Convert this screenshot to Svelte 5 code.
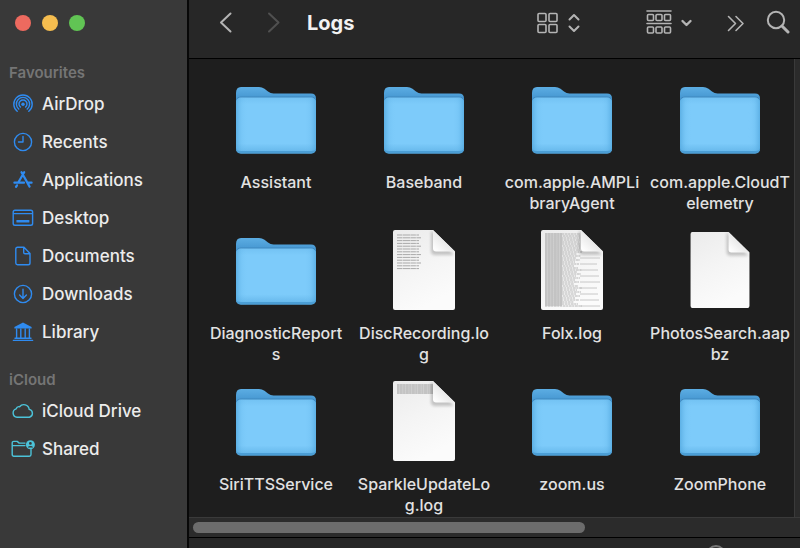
<script lang="ts">
	type Kind = 'folder' | 'doc';
	type Preview = 'list' | 'dense' | 'header';

	interface Entry {
		lines: string[];
		kind: Kind;
		preview?: Preview;
		small?: boolean;
	}

	const sections = [
		{
			title: 'Favourites',
			tint: 'blue',
			items: ['AirDrop', 'Recents', 'Applications', 'Desktop', 'Documents', 'Downloads', 'Library']
		},
		{ title: 'iCloud', tint: 'teal', items: ['iCloud Drive', 'Shared'] }
	];

	const entries: Entry[] = [
		{ lines: ['Assistant'], kind: 'folder' },
		{ lines: ['Baseband'], kind: 'folder' },
		{ lines: ['com.apple.AMPLi', 'braryAgent'], kind: 'folder' },
		{ lines: ['com.apple.CloudT', 'elemetry'], kind: 'folder' },
		{ lines: ['DiagnosticReport', 's'], kind: 'folder' },
		{ lines: ['DiscRecording.lo', 'g'], kind: 'doc', preview: 'list' },
		{ lines: ['Folx.log'], kind: 'doc', preview: 'dense' },
		{ lines: ['PhotosSearch.aap', 'bz'], kind: 'doc', small: true },
		{ lines: ['SiriTTSService'], kind: 'folder' },
		{ lines: ['SparkleUpdateLo', 'g.log'], kind: 'doc', preview: 'header' },
		{ lines: ['zoom.us'], kind: 'folder' },
		{ lines: ['ZoomPhone'], kind: 'folder' }
	];

	const listRows = Array.from({ length: 13 }, (_, i) => 5 + i * 2.8);
	const denseRows = Array.from({ length: 37 }, (_, i) => 4 + i * 2);

	let zoom = $state(50);
</script>

{#snippet sideIcon(name: string)}
	<svg class="side-icon" viewBox="0 0 24 24" aria-hidden="true">
		{#if name === 'AirDrop'}
			<path d="M6.2 19.3A9.2 9.2 0 1 1 17.8 19.3M7.8 17.1A6.6 6.6 0 1 1 16.2 17.1M9.4 15A4 4 0 1 1 14.6 15" />
			<circle class="solid" cx="12" cy="12.2" r="1.7" />
		{:else if name === 'Recents'}
			<circle cx="12" cy="12" r="8.6" />
			<path d="M12 6.5V12H7.5" />
		{:else if name === 'Applications'}
			<path class="thick" d="M13.2 4.2L7.4 14.3M10.5 4.2L18.6 18.6M3.4 14.7H13M16.4 14.7H20.6M6 17.3L5 18.9" />
		{:else if name === 'Desktop'}
			<rect x="2.2" y="4.3" width="19.4" height="15" rx="1.8" />
			<path d="M2.5 7.6H21.3" />
			<rect class="solid" x="5.4" y="14" width="13" height="2.6" rx="0.6" />
		{:else if name === 'Documents'}
			<path d="M6.6 3.2H13L19 9.4V19a1.8 1.8 0 0 1-1.8 1.8H6.6A1.8 1.8 0 0 1 4.8 19V5a1.8 1.8 0 0 1 1.8-1.8ZM12.7 3.5V8.4a1.3 1.3 0 0 0 1.3 1.3H18.8" />
		{:else if name === 'Downloads'}
			<circle cx="12" cy="12" r="8.6" />
			<path d="M12 7.2V16.2M8.6 13L12 16.4L15.4 13" />
		{:else if name === 'Library'}
			<path class="solid" d="M12 2.6L20.6 7V8.6H3.4V7Z" />
			<path d="M5.6 9V18M9.8 9V18M14.2 9V18M18.4 9V18" />
			<path d="M4 18.3H20M2.4 20.4H21.6" />
		{:else if name === 'iCloud Drive'}
			<path d="M6 18.2A4.3 4.3 0 0 1 5.2 9.8A2.9 2.9 0 0 1 8.6 7.7A5.4 5.4 0 0 1 18.2 10.4A4 4 0 0 1 18.4 18.2Z" />
		{:else}
			<path d="M14 8.6H1.6M20 12.5V17.6a1.6 1.6 0 0 1-1.6 1.6H2.8A1.6 1.6 0 0 1 1.2 17.6V6A1.6 1.6 0 0 1 2.8 4.4H6.2L8.2 6.1H14" />
			<circle class="solid" cx="19.4" cy="7.8" r="4.5" />
			<path class="cutout" d="M19.4 5a1.4 1.4 0 1 1 0 2.8a1.4 1.4 0 0 1 0-2.8ZM16.7 10.4a2.8 2 0 0 1 5.4 0Z" />
		{/if}
	</svg>
{/snippet}

{#snippet folderIcon()}
	<svg class="file-icon" viewBox="0 0 80 80" aria-hidden="true">
		<path fill="url(#folder-back)" d="M0 14Q0 8 5 8H23Q26 8 28.5 9.8L32 12.5Q34.5 14.5 37.5 14.5H75Q80 14.5 80 19.5V40H0Z" />
		<path fill="#3f87bd" d="M0.5 20Q1.5 17.5 5 17.5H75Q78.500 17.5 79.5 20V26H0.5Z" />
		<rect fill="url(#folder-front)" x="0" y="18.5" width="80" height="56" rx="5" />
		<rect fill="url(#folder-sides)" x="0" y="18.5" width="80" height="56" rx="5" />
		<path fill="#4b9ed5" d="M0 68.5V69.5Q0 74.5 5 74.5H75Q80 74.5 80 69.5V68.5Q80 72 75 72H5Q0 72 0 68.5Z" />
	</svg>
{/snippet}

{#snippet docIcon(preview: Preview | undefined, small: boolean | undefined)}
	<svg class="file-icon" class:small viewBox="0 0 80 80" aria-hidden="true">
		<path fill="url(#paper)" d="M11 0H49L71 21.5V78Q71 80 69 80H11Q9 80 9 78V2Q9 0 11 0Z" />
		{#if preview === 'list'}
			{#each listRows as y, i}
				<path class="row" d="M13 {y}H{i % 3 === 1 ? 37 : 35}" />
			{/each}
		{:else if preview === 'dense'}
			<rect x="13" y="3" width="17" height="73" fill="#d6d6d6" />
			{#each denseRows as y, i}
				<path class="dense a" d="M13 {y}H30" />
				<path class="dense b" stroke-dashoffset={(i * 7) % 5} d="M30 {y}H{y < 21 ? 48 : 50 - ((i * 5) % 9)}" />
				{#if y > 22 && i % 3 === 0}
					<path class="dense c" d="M48 {y}H{68 - ((i * 5) % 4)}" />
				{/if}
			{/each}
		{:else if preview === 'header'}
			<rect x="13" y="3" width="36" height="10" fill="#d6d6d6" />
			{#each [4, 6, 8, 10, 12] as y}
				<path class="dense a" d="M13 {y}H49" />
			{/each}
		{/if}
		<path fill="#000" opacity="0.2" filter="url(#soft)" d="M47 1V21Q47 25 51 25H70L48 1Z" clip-path="url(#paper-clip)" />
		<path fill="url(#fold)" d="M49 0L71 21.5H52Q49 21.5 49 18.5Z" />
	</svg>
{/snippet}

<svg class="defs" width="0" height="0" aria-hidden="true">
	<defs>
		<linearGradient id="folder-back" x1="0" y1="0" x2="0" y2="1">
			<stop offset="0" stop-color="#5cade3" />
			<stop offset="0.35" stop-color="#4697d1" />
		</linearGradient>
		<linearGradient id="folder-front" x1="0" y1="0" x2="0" y2="1">
			<stop offset="0" stop-color="#73c2f3" />
			<stop offset="0.12" stop-color="#7dcbfa" />
			<stop offset="0.82" stop-color="#7dcbfa" />
			<stop offset="1" stop-color="#62b4e8" />
		</linearGradient>
		<linearGradient id="folder-sides">
			<stop offset="0" stop-color="#4fa5dc" stop-opacity="0.7" />
			<stop offset="0.07" stop-color="#5fb3e8" stop-opacity="0.2" />
			<stop offset="0.15" stop-color="#7dcbfa" stop-opacity="0" />
			<stop offset="0.85" stop-color="#7dcbfa" stop-opacity="0" />
			<stop offset="0.93" stop-color="#5fb3e8" stop-opacity="0.2" />
			<stop offset="1" stop-color="#4fa5dc" stop-opacity="0.7" />
		</linearGradient>
		<linearGradient id="paper" x1="0" y1="0" x2="0.4" y2="1">
			<stop offset="0" stop-color="#ebebeb" />
			<stop offset="0.5" stop-color="#f4f4f4" />
			<stop offset="1" stop-color="#fbfbfb" />
		</linearGradient>
		<linearGradient id="fold" x1="0.6" y1="0.4" x2="0.1" y2="0.9">
			<stop offset="0" stop-color="#e4e4e4" />
			<stop offset="1" stop-color="#fdfdfd" />
		</linearGradient>
		<filter id="soft" x="-20%" y="-20%" width="140%" height="140%">
			<feGaussianBlur stdDeviation="1.5" />
		</filter>
		<clipPath id="paper-clip"><path d="M9 0H49L71 21.5V80H9Z" /></clipPath>
	</defs>
</svg>

<div class="finder">
	<aside class="sidebar">
		<div class="window-controls">
			<button class="light close" aria-label="Close"></button>
			<button class="light minimise" aria-label="Minimise"></button>
			<button class="light expand" aria-label="Zoom"></button>
		</div>
		{#each sections as section}
			<nav class="section {section.tint}" aria-label={section.title}>
				<h2>{section.title}</h2>
				{#each section.items as item}
					<a class="side-item" href="#{item}">
						{@render sideIcon(item)}
						<span>{item}</span>
					</a>
				{/each}
			</nav>
		{/each}
	</aside>

	<main class="browser">
		<header class="toolbar">
			<div class="history">
				<button class="tool" aria-label="Back">
					<svg width="22" height="26" viewBox="0 0 22 26"><path d="M15.5 4.5L6 13.5L15.5 22.5" /></svg>
				</button>
				<button class="tool" aria-label="Forward" disabled>
					<svg width="22" height="26" viewBox="0 0 22 26"><path d="M6 4.5L15.5 13.5L6 22.5" /></svg>
				</button>
			</div>
			<h1>Logs</h1>
			<div class="actions">
				<button class="tool" aria-label="View as icons">
					<svg width="24" height="26" viewBox="0 0 24 26">
						<g class="fine">
							<rect x="2" y="4.5" width="8" height="8" rx="1" />
							<rect x="13" y="4.5" width="8" height="8" rx="1" />
							<rect x="2" y="15.5" width="8" height="8" rx="1" />
							<rect x="13" y="15.5" width="8" height="8" rx="1" />
						</g>
					</svg>
					<svg width="13" height="26" viewBox="0 0 13 26"><path d="M1.500 10.500L6 6L10.500 10.500M1.500 17.500L6 22L10.500 17.500" /></svg>
				</button>
				<button class="tool" aria-label="Group items">
					<svg width="26" height="26" viewBox="0 0 26 26">
						<path class="fine" d="M1 2H25M1 14.500H25" />
						<g class="fine">
							{#each [5.5, 18] as y}
								{#each [1.5, 10, 18.5] as x}
									<rect {x} {y} width="6" height="6" rx="1" />
								{/each}
							{/each}
						</g>
					</svg>
					<svg width="13" height="26" viewBox="0 0 13 26"><path class="bold" d="M2.5 12L6.5 16L10.5 12" /></svg>
				</button>
				<button class="tool" aria-label="More">
					<svg width="18" height="26" viewBox="0 0 18 26"><path class="fine" d="M1.500 7.500L8.500 14.500L1.500 21.500M9 7.500L16 14.500L9 21.500" /></svg>
				</button>
				<button class="tool" aria-label="Search">
					<svg width="24" height="26" viewBox="0 0 24 26"><circle cx="10" cy="11" r="8.2" /><path class="handle" d="M16 17L22 23" /></svg>
				</button>
			</div>
		</header>

		<div class="pane">
			<ul class="files">
				{#each entries as entry}
					<li class="file">
						{#if entry.kind === 'folder'}
							{@render folderIcon()}
						{:else}
							{@render docIcon(entry.preview, entry.small)}
						{/if}
						<span class="name">
							{#each entry.lines as line}<span>{line}</span>{/each}
						</span>
					</li>
				{/each}
			</ul>
			<div class="track-y"></div>
		</div>
		<div class="track-x"><div class="thumb"></div></div>

		<footer class="status">
			<input type="range" min="0" max="100" bind:value={zoom} aria-label="Icon size" />
		</footer>
	</main>
</div>

<style>
	:global(body) {
		margin: 0;
		background: #1e1e1e;
		overflow: hidden;
	}

	.defs {
		position: absolute;
	}

	.finder {
		display: flex;
		height: 100vh;
		overflow: hidden;
		font-family: Inter, 'Liberation Sans', sans-serif;
		color: #e2e2e2;
	}

	button {
		padding: 0;
		border: 0;
		background: none;
		color: inherit;
	}

	svg {
		display: block;
		fill: none;
		flex: none;
	}

	.sidebar {
		flex: none;
		width: 187px;
		background: #393939;
		border-right: 2px solid #080808;
	}

	.window-controls {
		display: flex;
		gap: 11px;
		height: 46px;
		padding: 15px 15px 0;
		box-sizing: border-box;
		margin-bottom: 15px;
	}

	.light {
		width: 16px;
		height: 16px;
		border-radius: 50%;
	}

	.close {
		background: #ed6a5f;
	}

	.minimise {
		background: #f5bd4f;
	}

	.expand {
		background: #61c454;
	}

	.section {
		margin-bottom: 17px;
	}

	.section h2 {
		margin: 0;
		padding-left: 9px;
		font-size: 15px;
		font-weight: 600;
		line-height: 24px;
		color: #757575;
	}

	.side-item {
		display: flex;
		align-items: center;
		gap: 7px;
		height: 38px;
		padding-left: 11px;
		font-size: 17px;
		font-weight: 500;
		color: #ececec;
		text-decoration: none;
		white-space: nowrap;
	}

	.side-icon {
		width: 24px;
		height: 24px;
		stroke: currentColor;
		stroke-width: 1.4;
		stroke-linecap: round;
		stroke-linejoin: round;
	}

	.blue .side-icon {
		color: #2f8bf0;
	}

	.teal .side-icon {
		color: #4cc3d9;
	}

	.solid {
		fill: currentColor;
		stroke: none;
	}

	.thick {
		stroke-width: 2.2;
	}

	.cutout {
		fill: #393939;
		stroke: none;
	}

	.browser {
		flex: 1;
		min-width: 0;
		display: flex;
		flex-direction: column;
	}

	.toolbar {
		flex: none;
		display: flex;
		align-items: flex-start;
		height: 58px;
		box-sizing: border-box;
		padding: 9px 10px 0 26px;
		background: #272727;
	}

	.history {
		display: flex;
		gap: 26px;
	}

	.toolbar h1 {
		margin: 0 0 0 22px;
		font-size: 20px;
		font-weight: 700;
		line-height: 28px;
		color: #f2f2f2;
	}

	.actions {
		display: flex;
		margin-left: auto;
	}

	.tool {
		display: flex;
		align-items: center;
		gap: 8px;
		color: #b4b4b4;
	}

	.tool:disabled {
		color: #505050;
	}

	.tool svg {
		stroke: currentColor;
		stroke-width: 2;
		stroke-linecap: round;
		stroke-linejoin: round;
	}

	.fine {
		stroke-width: 1.6;
	}

	.bold {
		stroke-width: 2.4;
	}

	.handle {
		stroke-width: 3;
	}

	.actions .tool:nth-child(1) {
		margin-right: 65px;
	}

	.actions .tool:nth-child(2) {
		margin-right: 34px;
	}

	.actions .tool:nth-child(3) {
		margin-right: 21px;
	}

	.pane {
		flex: none;
		display: flex;
		border-top: 1px solid #000;
		background: #1e1e1e;
	}

	.files {
		flex: 1;
		display: grid;
		grid-template-columns: repeat(auto-fill, 148px);
		row-gap: 15px;
		margin: 0;
		padding: 20px 0 0 13px;
		list-style: none;
	}

	.file {
		display: flex;
		flex-direction: column;
		align-items: center;
		gap: 13px;
		min-height: 136px;
	}

	.file-icon {
		width: 80px;
		height: 80px;
	}

	.file-icon.small {
		width: 76px;
		height: 76px;
		margin: 2px;
	}

	.row {
		stroke: #a9a9a9;
		stroke-width: 1;
		stroke-dasharray: 5 0.5 8 0.4;
	}

	.dense {
		stroke: #adadad;
		stroke-width: 0.9;
		stroke-dasharray: 2 0.6 3 0.5;
	}

	.dense.c {
		stroke: #c2c2c2;
		stroke-dasharray: none;
	}

	.name {
		display: flex;
		flex-direction: column;
		align-items: center;
		font-size: 16px;
		font-weight: 500;
		line-height: 21px;
		white-space: nowrap;
	}

	.track-y {
		flex: none;
		width: 5px;
		border-left: 1px solid #3a3a3a;
		background: #2b2b2b;
	}

	.track-x {
		flex: none;
		height: 20px;
		padding: 4px 4px 0;
		box-sizing: border-box;
		border-top: 1px solid #3a3a3a;
		background: #2b2b2b;
	}

	.thumb {
		width: 65%;
		height: 11px;
		border-radius: 6px;
		background: #6c6c6c;
	}

	.status {
		flex: none;
		display: flex;
		justify-content: flex-end;
		height: 34px;
		padding: 7px 20px 0;
		border-top: 1px solid #000;
		background: #272727;
	}

	.status input {
		appearance: none;
		width: 128px;
		height: 20px;
		margin: 0;
		background: none;
	}

	.status input::-webkit-slider-thumb {
		appearance: none;
		width: 20px;
		height: 20px;
		border: 2px solid #777;
		border-radius: 50%;
		background: #333;
	}
</style>
